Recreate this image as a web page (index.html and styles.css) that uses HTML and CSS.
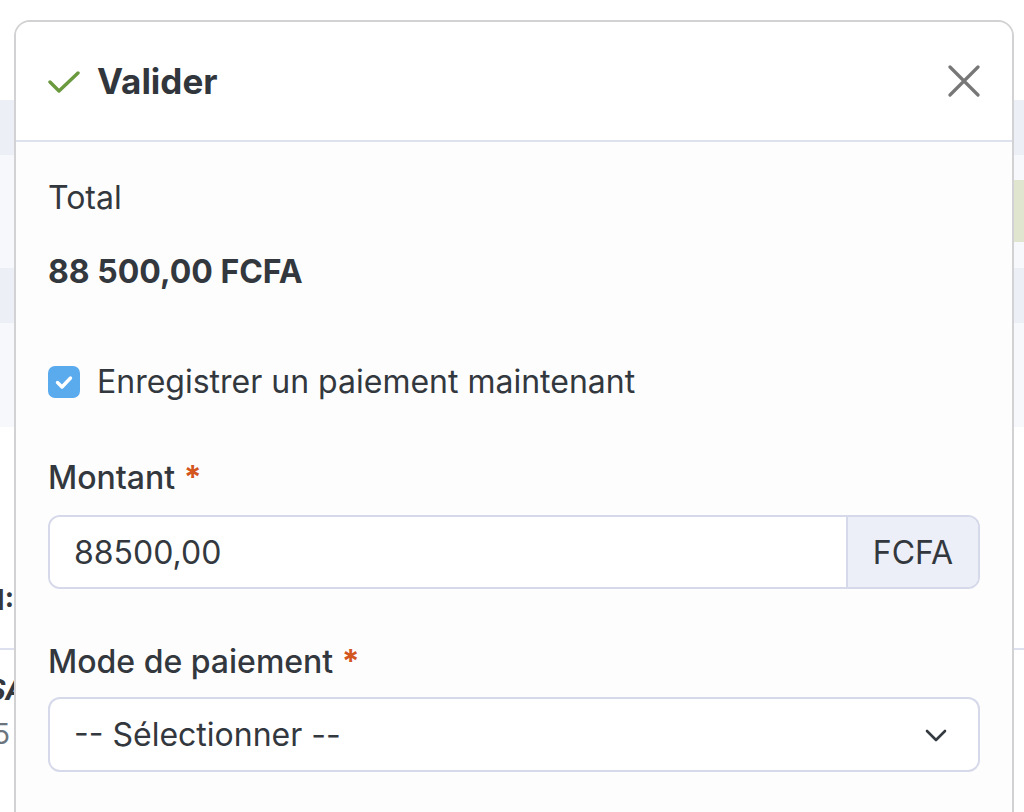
FILE: index.html
```html
<!DOCTYPE html>
<html lang="fr">
<head>
<meta charset="utf-8">
<title>Valider</title>
<link rel="stylesheet" href="styles.css">
</head>
<body>
<div class="page">
  <div class="bg-gap-top"></div>
  <div class="bg-row bg-head"></div>
  <div class="bg-row bg-light bg-tall">
    <span class="bg-badge"></span>
  </div>
  <div class="bg-row bg-head"></div>
  <div class="bg-row bg-light bg-tall2"></div>
  <div class="bg-left">
    <div class="bg-t1">1:</div>
    <div class="bg-t2">SA</div>
    <div class="bg-t3">5</div>
  </div>
  <div class="bg-rule"></div>
</div>

<div class="modal">
  <div class="modal-header">
    <div class="title">
      <svg class="check" viewBox="0 0 32 32" width="32" height="32" aria-hidden="true">
        <path d="M2 17 L11 26 L30 8" fill="none" stroke="#6b9a3e" stroke-width="3.4" stroke-linecap="round" stroke-linejoin="round"/>
      </svg>
      <span>Valider</span>
    </div>
    <svg class="close" viewBox="0 0 32 32" width="32" height="32" aria-hidden="true">
      <path d="M2 2 L30 30 M30 2 L2 30" fill="none" stroke="#777" stroke-width="3.2" stroke-linecap="round"/>
    </svg>
  </div>
  <div class="modal-body">
    <div class="total-label">Total</div>
    <div class="total-value">88 500,00 FCFA</div>
    <label class="check-row">
      <span class="checkbox">
        <svg viewBox="0 0 32 32" width="32" height="32" aria-hidden="true">
          <path d="M9.5 16.5 L14 21 L22.5 12" fill="none" stroke="#fff" stroke-width="3.4" stroke-linecap="round" stroke-linejoin="round"/>
        </svg>
      </span>
      <span>Enregistrer un paiement maintenant</span>
    </label>
    <div class="field-label">Montant <span class="req">*</span></div>
    <div class="input-group">
      <div class="input">88500,00</div>
      <div class="addon">FCFA</div>
    </div>
    <div class="field-label field-label2">Mode de paiement <span class="req">*</span></div>
    <div class="select">
      <span>-- Sélectionner --</span>
      <svg viewBox="0 0 24 24" width="24" height="24" aria-hidden="true">
        <path d="M3 8 L12 17 L21 8" fill="none" stroke="#343a40" stroke-width="2.6" stroke-linecap="round" stroke-linejoin="round"/>
      </svg>
    </div>
  </div>
</div>
</body>
</html>
```

FILE: styles.css
```css
* { box-sizing: border-box; }
html, body { margin: 0; padding: 0; }
body {
  width: 1024px;
  height: 812px;
  overflow: hidden;
  background: #ffffff;
  font-family: Inter, "Noto Sans", "Liberation Sans", sans-serif;
  color: #33383e;
  position: relative;
}

.page {
  position: relative;
  width: 1024px;
  height: 812px;
}
.bg-gap-top { height: 100px; }
.bg-row { position: relative; }
.bg-head { height: 55px; background: #edeff6; }
.bg-light { background: #f7f8fc; }
.bg-tall { height: 113px; }
.bg-tall2 { height: 104px; }
.bg-badge {
  position: absolute;
  right: -10px;
  top: 25px;
  width: 60px;
  height: 62px;
  border-radius: 8px;
  background: #dfe5cf;
}
.bg-left {
  width: 14px;
  display: flex;
  flex-direction: column;
  align-items: flex-end;
  padding-top: 153px;
  font-size: 28px;
  line-height: 40px;
  white-space: nowrap;
}
.bg-t1 { font-weight: 700; color: #33383e; }
.bg-t2 {
  font-weight: 700;
  font-style: italic;
  margin-top: 50px;
  margin-right: -12px;
  color: #33383e;
}
.bg-t3 { color: #6c757d; margin-top: 4px; margin-right: 4px; }
.bg-rule {
  position: absolute;
  left: 0;
  right: 0;
  top: 648px;
  height: 2px;
  background: #dde0ee;
}

.modal {
  position: absolute;
  left: 14px;
  top: 20px;
  width: 1000px;
  height: 820px;
  border: 2px solid #d2d2d4;
  border-radius: 16px;
  background: #fdfdfd;
  overflow: hidden;
}
.modal-header {
  height: 120px;
  background: #ffffff;
  border-bottom: 2px solid #dee1ee;
  display: flex;
  align-items: center;
  justify-content: space-between;
  padding: 0 32px;
}
.title {
  display: flex;
  align-items: center;
  gap: 17px;
  font-size: 35px;
  font-weight: 700;
  color: #31363c;
}
.check { display: block; }
.close { display: block; }

.modal-body {
  padding: 32px 32px 0;
  font-size: 32px;
}
.total-label { line-height: 48px; }
.total-value { font-weight: 700; line-height: 48px; margin-top: 26px; }
.check-row {
  display: flex;
  align-items: center;
  gap: 17px;
  margin-top: 62px;
  line-height: 48px;
}
.checkbox {
  width: 32px;
  height: 32px;
  border-radius: 7px;
  background: #5aaaee;
  display: flex;
}
.field-label {
  font-weight: 500;
  line-height: 48px;
  margin-top: 48px;
}
.field-label2 { margin-top: 49px; }
.req { color: #d4561f; font-weight: 700; }
.input-group {
  display: flex;
  height: 74px;
  margin-top: 13px;
  border: 2px solid #d6d9ea;
  border-radius: 12px;
  overflow: hidden;
}
.input {
  flex: 1;
  display: flex;
  align-items: center;
  padding: 0 24px;
  background: #ffffff;
}
.addon {
  width: 132px;
  display: flex;
  align-items: center;
  justify-content: center;
  background: #eceff8;
  border-left: 2px solid #d6d9ea;
}
.select {
  display: flex;
  align-items: center;
  justify-content: space-between;
  height: 75px;
  margin-top: 11px;
  padding: 0 30px 0 24px;
  border: 2px solid #d6d9ea;
  border-radius: 12px;
  background: #ffffff;
}
.select svg { display: block; }
```
